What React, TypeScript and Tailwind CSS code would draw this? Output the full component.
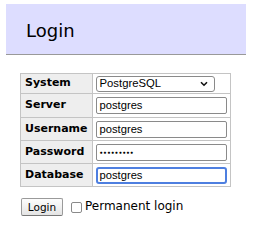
import React from 'react';

const rows = [
  { label: 'Username', value: 'postgres', type: 'text' },
  { label: 'Password', value: 'postgres1', type: 'password' },
];

const App = () => {
  return (
    <div className="w-[275px] h-[240px] bg-white pt-[4px] pl-[6px] font-['DejaVu_Sans',sans-serif] text-black">
      {/* Titulo */}
      <div className="w-[240px] h-[51px] bg-[#ddddff] border-b border-[#999999] pl-[20px] flex items-center">
        <h2 className="text-[18px] leading-none pt-[4px]">Login</h2>
      </div>

      {/* Formulario */}
      <table className="mt-[18px] ml-[14px] border-collapse text-[11px]">
        <tbody>
          <tr>
            <th className="bg-[#eeeeee] border border-[#c4c4c4] text-left font-bold pl-[4px] pr-[4px] h-[20px]">System</th>
            <td className="border border-[#c4c4c4] px-[3px] w-[137px]">
              <div className="w-[119px] h-[16px] border border-[#8a8a8a] rounded-[3px] bg-white flex items-center justify-between pl-[3px] pr-[6px] font-['Liberation_Sans',sans-serif] text-[11.3px]">
                <span>PostgreSQL</span>
                <svg width="8" height="6" viewBox="0 0 8 6">
                  <path d="M1 1.2 L4 4.2 L7 1.2" fill="none" stroke="#111" strokeWidth="1.6" />
                </svg>
              </div>
            </td>
          </tr>
          <tr>
            <th className="bg-[#eeeeee] border border-[#c4c4c4] text-left font-bold pl-[4px] pr-[4px] h-[24px]">Server</th>
            <td className="border border-[#c4c4c4] px-[3px]">
              <div className="w-[131px] h-[17px] border border-[#8a8a8a] rounded-[2px] bg-white flex items-center pl-[3px] font-['Liberation_Sans',sans-serif] text-[11.2px]">
                postgres
              </div>
            </td>
          </tr>
          {rows.map((r) => (
            <tr key={r.label}>
              <th className="bg-[#eeeeee] border border-[#c4c4c4] text-left font-bold pl-[4px] pr-[4px] h-[23px]">{r.label}</th>
              <td className="border border-[#c4c4c4] px-[3px]">
                <div className="w-[131px] h-[17px] border border-[#8a8a8a] rounded-[2px] bg-white flex items-center pl-[3px] font-['Liberation_Sans',sans-serif] text-[11.2px]">
                  {r.type === 'password' ? (
                    <span className="text-[5px] tracking-[0.8px] leading-none">●●●●●●●●●</span>
                  ) : (
                    r.value
                  )}
                </div>
              </td>
            </tr>
          ))}
          <tr>
            <th className="bg-[#eeeeee] border border-[#c4c4c4] text-left font-bold pl-[4px] pr-[4px] h-[23px]">Database</th>
            <td className="border border-[#c4c4c4] px-[3px]">
              <div className="w-[131px] h-[17px] border-2 border-[#4e7fe0] rounded-[3px] bg-white flex items-center pl-[2px] font-['Liberation_Sans',sans-serif] text-[11.2px]">
                postgres
              </div>
            </td>
          </tr>
        </tbody>
      </table>

      {/* Botao e checkbox */}
      <div className="mt-[11px] ml-[15px] flex items-center text-[11px]">
        <button className="w-[42px] h-[18px] border border-[#9a9a9a] border-b-[#777777] rounded-[2px] bg-gradient-to-b from-[#fdfdfd] to-[#e4e4e4] text-[10.5px] leading-none">
          Login
        </button>
        <div className="ml-[8px] w-[11px] h-[11px] border border-[#8a8a8a] rounded-[2px] bg-white" />
        <span className="ml-[3px] text-[12px] -mt-[3px]">Permanent login</span>
      </div>
    </div>
  );
};

export default App;
